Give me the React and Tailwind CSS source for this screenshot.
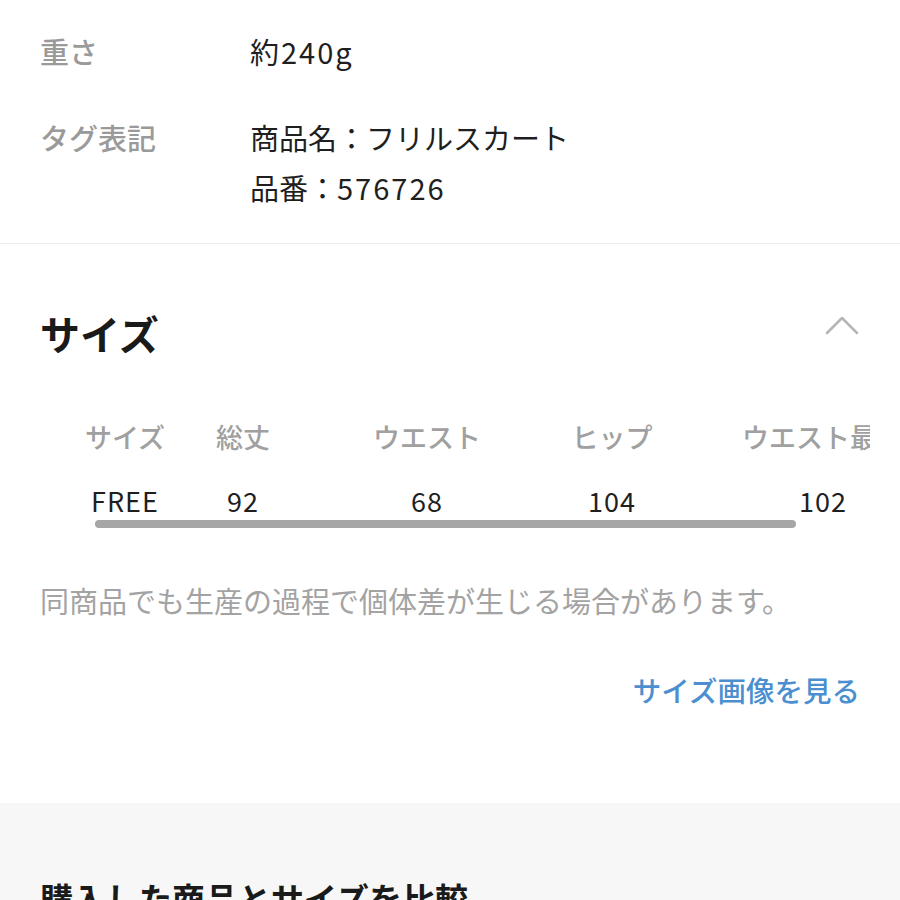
export default function App() {
  const font = { fontFamily: '"Noto Sans CJK JP", "Noto Sans", sans-serif' };
  const cols = [
    { w: "w-[110px]", h: "サイズ", v: "FREE" },
    { w: "w-[126px]", h: "総丈", v: "92" },
    { w: "w-[242px]", h: "ウエスト", v: "68" },
    { w: "w-[128px]", h: "ヒップ", v: "104" },
    { w: "w-[294px]", h: "ウエスト最大", v: "102" },
  ];
  return (
    <div className="w-[900px] h-[900px] overflow-hidden bg-white" style={font}>
      {/* spec section */}
      <div className="px-[40px] pt-[26px] pb-[31px] border-b border-[#ececec]">
        <div className="flex">
          <div className="w-[210px] text-[29px] leading-[50px] font-medium text-[#9a9a9a]">重さ</div>
          <div className="text-[29px] leading-[50px] text-[#1f1f1f]">
            約<span className="tracking-[2px] ml-[2px]">240g</span>
          </div>
        </div>
        <div className="flex mt-[36px]">
          <div className="w-[210px] text-[29px] leading-[50px] font-medium text-[#9a9a9a]">タグ表記</div>
          <div className="text-[29px] leading-[50px] text-[#1f1f1f]">
            <div>商品名：フリルスカート</div>
            <div>
              品番：<span className="tracking-[2px]">576726</span>
            </div>
          </div>
        </div>
      </div>

      {/* size section */}
      <div className="px-[40px] pt-[64px]">
        <div className="flex items-center justify-between">
          <div className="text-[40px] leading-[50px] font-bold text-[#1a1a1a]">サイズ</div>
          <svg width="34" height="20" viewBox="0 0 34 20" className="mr-[1px] mb-[16px]">
            <path d="M2 18 L17 3 L32 18" fill="none" stroke="#b5b5b5" strokeWidth="2.5" strokeLinecap="round" strokeLinejoin="round" />
          </svg>
        </div>

        <div className="w-[830px] overflow-hidden mt-[59px]">
          <div className="flex pl-[30px] w-max h-[40px] items-center">
            {cols.map((c) => (
              <div key={c.h} className={`${c.w} shrink-0 text-center text-[27px] leading-[40px] font-medium text-[#a0a0a0] whitespace-nowrap`}>
                {c.h}
              </div>
            ))}
          </div>
          <div className="flex pl-[30px] w-max h-[36px] mt-[26px] items-center">
            {cols.map((c) => (
              <div key={c.h} className={`${c.w} shrink-0 text-center text-[27px] leading-[36px] tracking-[1px] text-[#1f1f1f] whitespace-nowrap`}>
                {c.v}
              </div>
            ))}
          </div>
          <div className="ml-[55px] w-[701px] h-[8px] mt-[1px] rounded-full bg-[#a6a6a6]" />
        </div>

        <div className="mt-[52px] text-[29px] leading-[40px] text-[#a3a3a3] whitespace-nowrap">
          同商品でも生産の過程で個体差が生じる場合があります。
        </div>

        <div className="mt-[50px] flex justify-end">
          <div className="text-[28.5px] leading-[40px] font-medium text-[#4b8fd0]">サイズ画像を見る</div>
        </div>
      </div>

      {/* compare section */}
      <div className="mt-[93px] bg-[#f7f7f7] h-[200px] px-[40px] pt-[73px]">
        <div className="text-[33px] leading-[44px] font-bold text-[#1a1a1a] whitespace-nowrap">
          購入した商品とサイズを比較
        </div>
      </div>
    </div>
  );
}
